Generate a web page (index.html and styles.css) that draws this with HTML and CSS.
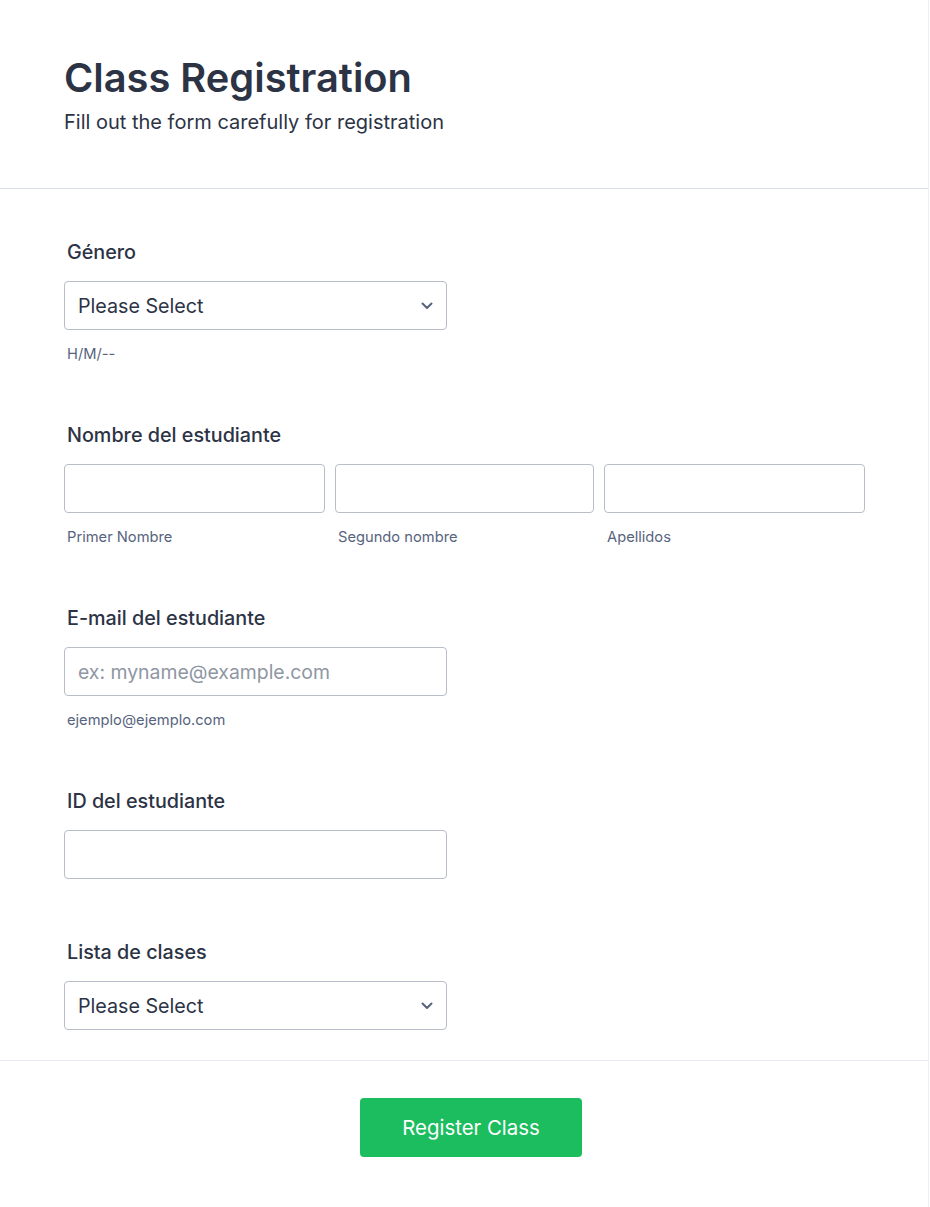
FILE: index.html
```html
<!DOCTYPE html>
<html lang="es">
<head>
<meta charset="utf-8">
<title>Class Registration</title>
<link rel="stylesheet" href="styles.css">
</head>
<body>
<div class="card">
  <header class="form-header">
    <h1 class="form-title">Class Registration</h1>
    <p class="form-subtitle">Fill out the form carefully for registration</p>
  </header>
  <main class="form-body">
    <div class="field">
      <label class="field-label">Género</label>
      <div class="select half">
        <span class="select-text">Please Select</span>
        <svg class="chevron" width="12" height="8" viewBox="0 0 12 8"><path d="M1.5 1.5 L6 6 L10.5 1.5" fill="none" stroke="#57647e" stroke-width="2" stroke-linecap="round" stroke-linejoin="round"/></svg>
      </div>
      <div class="sublabel">H/M/--</div>
    </div>

    <div class="field">
      <label class="field-label">Nombre del estudiante</label>
      <div class="name-row">
        <div class="name-col">
          <div class="input"></div>
          <div class="sublabel">Primer Nombre</div>
        </div>
        <div class="name-col">
          <div class="input"></div>
          <div class="sublabel">Segundo nombre</div>
        </div>
        <div class="name-col">
          <div class="input"></div>
          <div class="sublabel">Apellidos</div>
        </div>
      </div>
    </div>

    <div class="field">
      <label class="field-label">E-mail del estudiante</label>
      <div class="input half"><span class="placeholder">ex: myname@example.com</span></div>
      <div class="sublabel">ejemplo@ejemplo.com</div>
    </div>

    <div class="field no-sub">
      <label class="field-label">ID del estudiante</label>
      <div class="input half"></div>
    </div>

    <div class="field">
      <label class="field-label">Lista de clases</label>
      <div class="select half">
        <span class="select-text">Please Select</span>
        <svg class="chevron" width="12" height="8" viewBox="0 0 12 8"><path d="M1.5 1.5 L6 6 L10.5 1.5" fill="none" stroke="#57647e" stroke-width="2" stroke-linecap="round" stroke-linejoin="round"/></svg>
      </div>
    </div>
  </main>
  <footer class="form-footer">
    <button class="submit" type="button">Register Class</button>
  </footer>
</div>
</body>
</html>
```

FILE: styles.css
```css
* { box-sizing: border-box; }

html, body {
  margin: 0;
  padding: 0;
  background: #ffffff;
}

body {
  font-family: Inter, "Noto Sans", "Liberation Sans", sans-serif;
  color: #2c3345;
}

.card {
  width: 929px;
  min-height: 1207px;
  border-right: 1px solid #eceef3;
  background: #ffffff;
}

.form-header {
  padding: 54px 64px 52px;
  border-bottom: 1px solid #dadee5;
}

.form-title {
  margin: 0;
  font-size: 39.8px;
  line-height: 48px;
  font-weight: 600;
  color: #2c3345;
}

.form-subtitle {
  margin: 6px 0 0;
  font-size: 20px;
  line-height: 28px;
  font-weight: 400;
  color: #2c3345;
}

.form-body {
  padding: 49px 63px 30px 64px;
  display: flex;
  flex-direction: column;
  gap: 57px;
  border-bottom: 1px solid #eaebf2;
}

.field {
  display: flex;
  flex-direction: column;
}

.field.no-sub {
  padding-bottom: 2px;
}

.field-label {
  display: block;
  padding-left: 3px;
  font-size: 19.75px;
  line-height: 28px;
  font-weight: 500;
  color: #2c3345;
  margin-bottom: 15px;
}

.input,
.select {
  height: 49px;
  border: 1px solid #b8bdc9;
  border-radius: 4px;
  background: #ffffff;
  display: flex;
  align-items: center;
  padding: 0 13px;
}

.half {
  width: 383px;
}

.select {
  justify-content: space-between;
  padding-right: 13px;
}

.select-text {
  font-size: 19.7px;
  color: #2c3345;
}

.placeholder {
  font-size: 19.4px;
  color: #8f96a3;
}

.chevron {
  display: block;
}

.sublabel {
  margin-top: 14px;
  padding-left: 3px;
  font-size: 14.7px;
  line-height: 20px;
  color: #57647e;
}

.name-row {
  display: grid;
  grid-template-columns: 261px 259px 261px;
  column-gap: 10px;
}

.name-col {
  display: flex;
  flex-direction: column;
}

.form-footer {
  display: flex;
  justify-content: center;
  padding: 37px 0 50px 14px;
}

.submit {
  width: 222px;
  height: 59px;
  border: none;
  border-radius: 4px;
  background: #1bbd5e;
  color: #ffffff;
  font-family: Inter, "Noto Sans", "Liberation Sans", sans-serif;
  font-size: 20.4px;
  font-weight: 400;
  cursor: pointer;
}
```
